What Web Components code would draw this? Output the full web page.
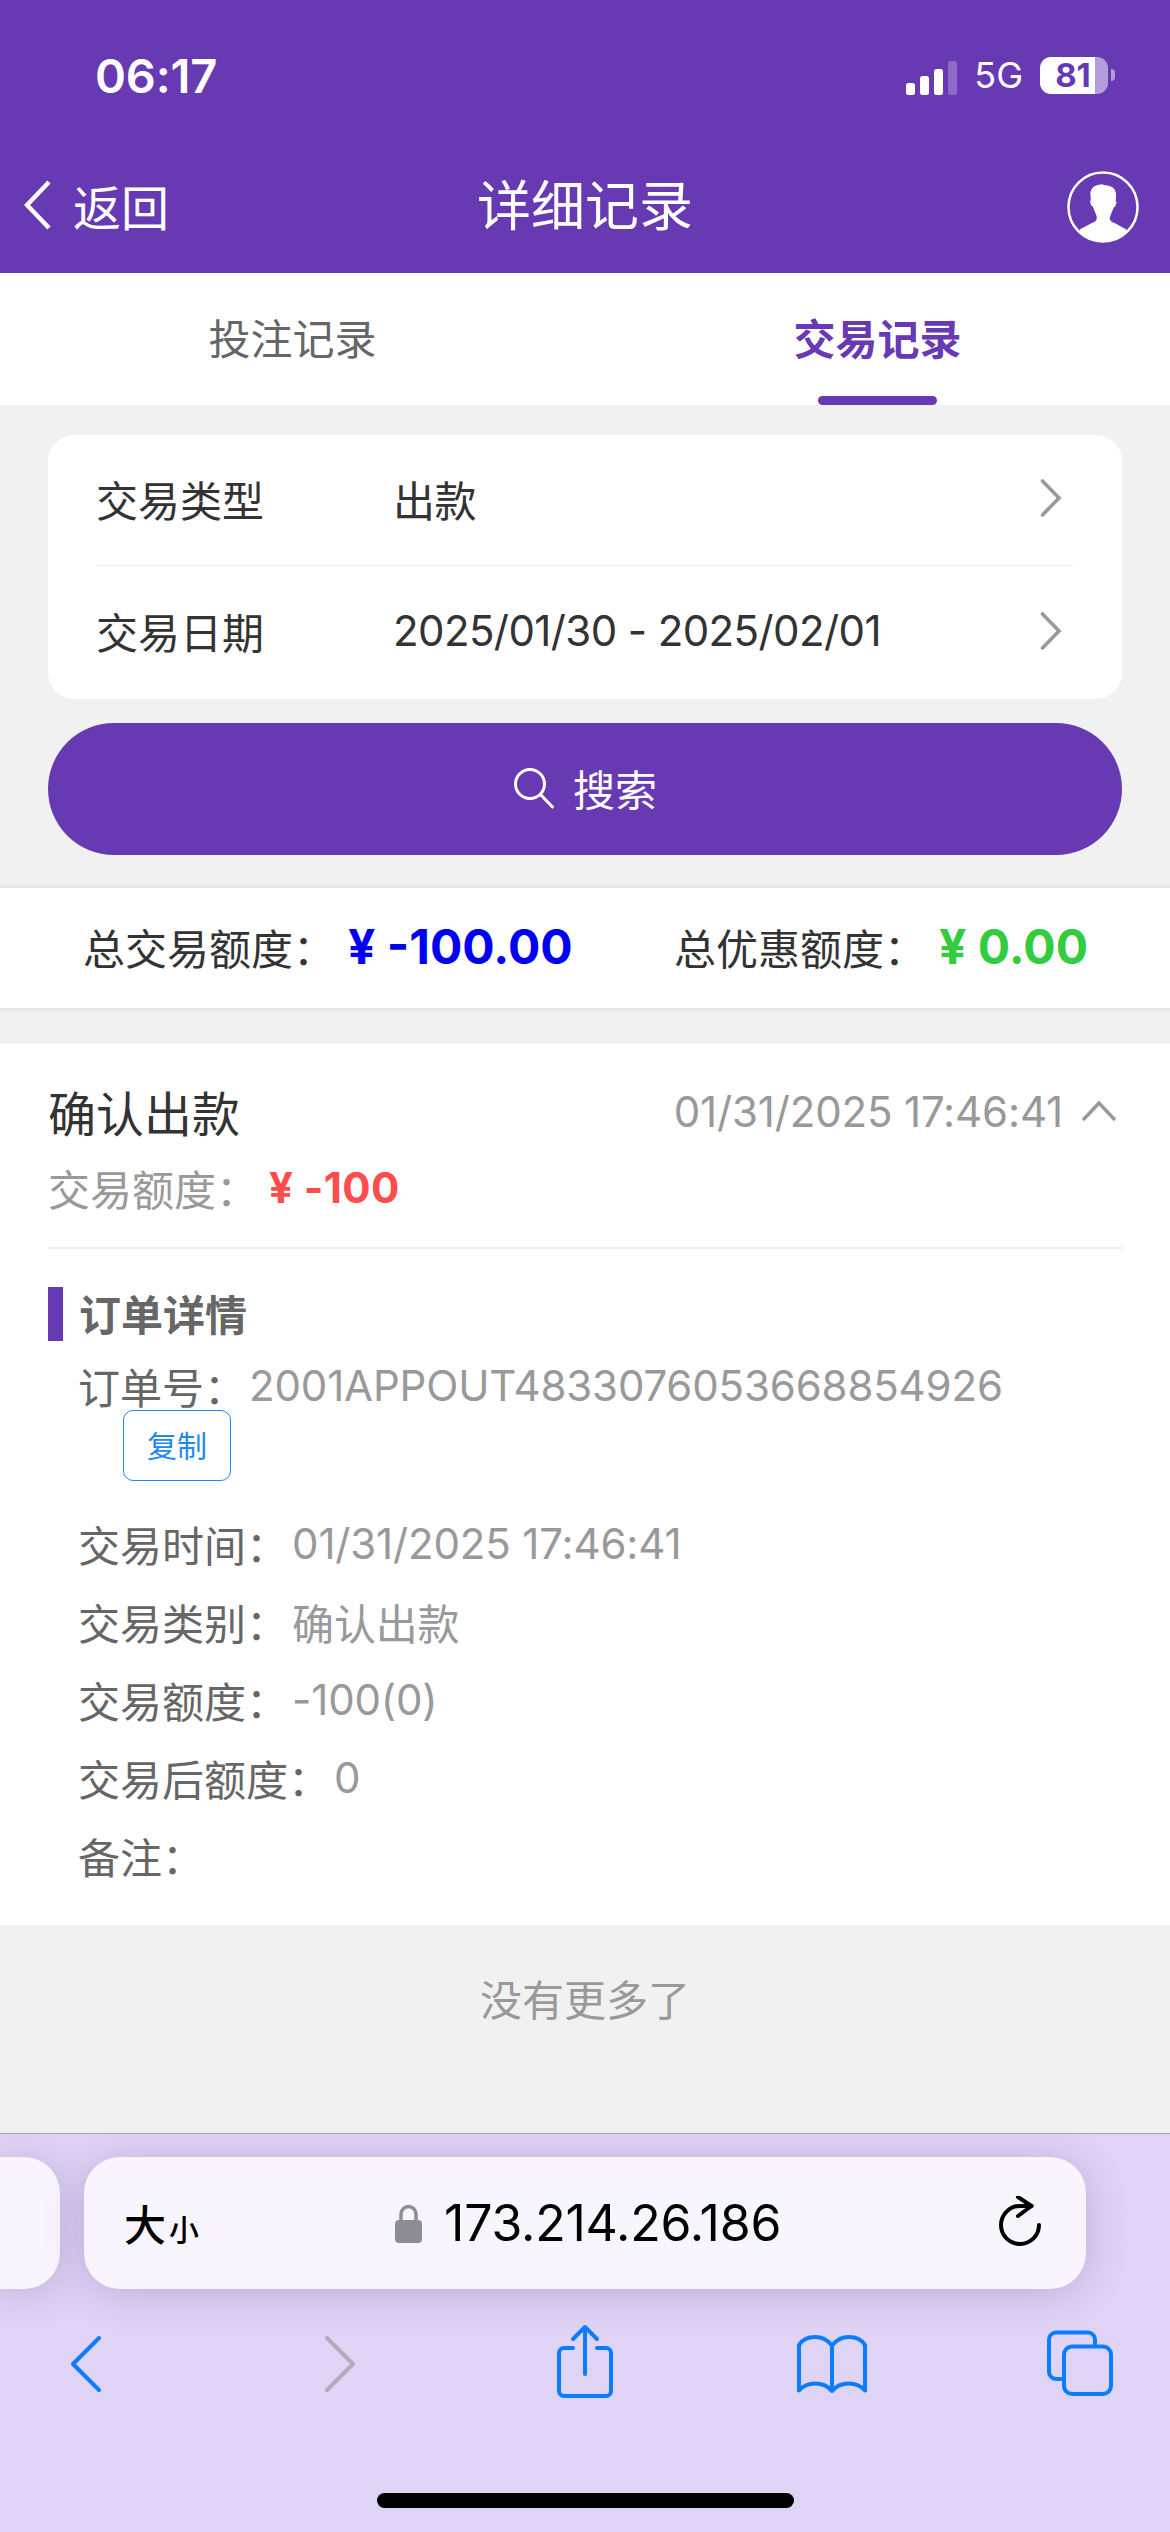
<!DOCTYPE html>
<html lang="zh">
<head>
<meta charset="utf-8">
<title>详细记录</title>
<style>
    html, body { margin: 0; padding: 0; width: 1170px; height: 2532px; overflow: hidden; background: #f1f1f1; }
    body {
        display: flex;
        flex-direction: column;
        font-family: Inter, "Noto Sans CJK SC", sans-serif;
        --purple: #673ab4;
    }
    page-content { flex: 1; }
</style>
</head>
<body>
    <status-bar time="06:17" network="5G" battery="81"></status-bar>
    <nav-header title="详细记录" back="返回"></nav-header>
    <tab-bar first="投注记录" second="交易记录"></tab-bar>
    <page-content>
        <filter-card>
            <filter-row label="交易类型" value="出款"></filter-row>
            <filter-row label="交易日期" value="2025/01/30 - 2025/02/01" last></filter-row>
        </filter-card>
        <search-button text="搜索"></search-button>
        <summary-bar>
            <summary-item label="总交易额度：" amount="¥ -100.00" color="#0000f5"></summary-item>
            <summary-item label="总优惠额度：" amount="¥ 0.00" color="#33cc3f"></summary-item>
        </summary-bar>
        <record-item title="确认出款" time="01/31/2025 17:46:41" amount="¥ -100">
            <detail-row label="交易时间：" value="01/31/2025 17:46:41"></detail-row>
            <detail-row label="交易类别：" value="确认出款"></detail-row>
            <detail-row label="交易额度：" value="-100(0)"></detail-row>
            <detail-row label="交易后额度：" value="0"></detail-row>
            <detail-row label="备注：" value=""></detail-row>
        </record-item>
        <list-end text="没有更多了"></list-end>
    </page-content>
    <browser-toolbar url="173.214.26.186"></browser-toolbar>

<script>
// small base so each element only has to give its css and its markup
class BaseElement extends HTMLElement {
    constructor() {
        super();
        this.attachShadow({ mode: "open" });
    }

    attr(name) {
        return this.getAttribute(name) || "";
    }

    // the traditional cut centres the full width colon in its box
    label(text) {
        return text.replace('：', '<span style="font-family:\'Noto Sans CJK TC\',sans-serif;color:inherit">：</span>');
    }

    connectedCallback() {
        this.shadowRoot.innerHTML = `<style>${this.templateCss()}</style>${this.template()}`;
    }
}

customElements.define('status-bar', class StatusBar extends BaseElement {
    templateCss() {
        return `
            :host { display: flex; align-items: center; height: 132px; padding: 18px 55px 0 95px; box-sizing: border-box;
                    background: var(--purple); color: #fff; }
            .time { font-size: 47px; font-weight: 600; letter-spacing: -.2px; flex: 1; }
            .signal { display: flex; align-items: flex-end; gap: 5px; height: 34px; margin: 5px 17px 0 0; }
            .signal i { display: block; width: 9px; background: #fff; border-radius: 2.5px; }
            .net { font-size: 36px; font-weight: 400; margin-right: 17px; }
            .battery { position: relative; width: 68px; height: 37px; border-radius: 11px; color: var(--purple);
                       font-size: 33px; font-weight: 700; line-height: 37px; text-align: center;
                       background: linear-gradient(90deg, #fff 55px, #b39ddb 55px); }
            .battery span { position: relative; left: -1px; }
            .nub { width: 4px; height: 12px; margin-left: 3px; background: #b39ddb; border-radius: 0 6px 6px 0; }
        `;
    }

    template() {
        return `
            <div class="time">${this.attr('time')}</div>
            <div class="signal">
                <i style="height:12px"></i><i style="height:19px"></i><i style="height:26px"></i>
                <i style="height:34px;background:#8d6bcb"></i>
            </div>
            <div class="net">${this.attr('network')}</div>
            <div class="battery"><span>${this.attr('battery')}</span></div>
            <div class="nub"></div>
        `;
    }
});

customElements.define('nav-header', class NavHeader extends BaseElement {
    templateCss() {
        return `
            :host { display: flex; align-items: center; height: 141px; padding: 0 31px 0 24px; box-sizing: border-box;
                    background: var(--purple); color: #fff; position: relative; }
            .back { display: flex; align-items: center; gap: 21px; font-size: 48px; flex: 1; margin-top: 4px; }
            .back svg { width: 28px; height: 50px; }
            .title { font-size: 54px; position: absolute; left: 0; right: 0; text-align: center; pointer-events: none; }
            .avatar { width: 72px; height: 72px; margin-top: 9px; }
        `;
    }

    template() {
        return `
            <div class="back">
                <svg viewBox="0 0 28 50"><path d="M25 2 3 25l22 23" fill="none" stroke="#fff" stroke-width="4.5"/></svg>
                <span>${this.attr('back')}</span>
            </div>
            <div class="title">${this.attr('title')}</div>
            <svg class="avatar" viewBox="0 0 74 74">
                <defs><clipPath id="disc"><circle cx="37" cy="37" r="35"/></clipPath></defs>
                <circle cx="37" cy="37" r="35.5" fill="none" stroke="#fff" stroke-width="2.6"/>
                <path clip-path="url(#disc)" fill="#fff" d="M37 13.500C29 13.500 24 17 24 24l.5 6-1 1 1.500 4.500 1.500 1 4 10V49c0 2-2 3.500-5 4.500L13 60v16h48V60l-12-6.500c-3-1-5-2.500-5-4.500v-1.500l4-10 1.500-1 1.500-4.500-1-1 .5-6c0-7-5-10.500-13-10.500z"/>
            </svg>
        `;
    }
});

customElements.define('tab-bar', class TabBar extends BaseElement {
    templateCss() {
        return `
            :host { display: flex; height: 132px; background: #fff; font-size: 42px; color: #666; }
            .tab { flex: 1; display: flex; align-items: center; justify-content: center; position: relative; padding-bottom: 6px; }
            .on { color: var(--purple); font-weight: 700; }
            .on::after { content: ""; position: absolute; left: 233px; bottom: 0; width: 119px; height: 9px;
                         background: var(--purple); border-radius: 5px; }
        `;
    }

    template() {
        return `
            <div class="tab">${this.attr('first')}</div>
            <div class="tab on">${this.attr('second')}</div>
        `;
    }
});

customElements.define('filter-card', class FilterCard extends BaseElement {
    templateCss() {
        return `:host { display: block; margin: 30px 48px 24px; padding: 0 49px; background: #fff; border-radius: 26px; }`;
    }

    template() {
        return `<slot></slot>`;
    }
});

customElements.define('filter-row', class FilterRow extends BaseElement {
    templateCss() {
        return `
            :host { display: flex; align-items: center; height: 131px; padding-bottom: 4px; box-sizing: border-box;
                    font-size: 42px; color: #333; border-bottom: 1.5px solid #eeeeee; }
            :host([last]) { height: 133px; border-bottom: 0; }
            .label { width: 297px; margin-left: -1px; }
            .value { flex: 1; letter-spacing: -.6px; }
            svg { width: 22px; height: 38px; margin-right: 11px; }
        `;
    }

    template() {
        return `
            <div class="label">${this.attr('label')}</div>
            <div class="value">${this.attr('value')}</div>
            <svg viewBox="0 0 22 38"><path d="M2.500 2 19 19 2.500 36" fill="none" stroke="#999" stroke-width="3.600" stroke-linecap="round"/></svg>
        `;
    }
});

customElements.define('search-button', class SearchButton extends BaseElement {
    templateCss() {
        return `
            :host { display: flex; align-items: center; justify-content: center; gap: 18px; height: 132px; margin: 0 48px;
                    padding-bottom: 3px; box-sizing: border-box;
                    background: var(--purple); border-radius: 66px; color: #fff; font-size: 42px; }
            svg { width: 42px; height: 42px; }
        `;
    }

    template() {
        return `
            <svg viewBox="0 0 42 42" fill="none" stroke="#fff" stroke-width="3">
                <circle cx="17" cy="17" r="14.500"/><path d="m27.500 27.500 12 12.500" stroke-linecap="round"/>
            </svg>
            <span>${this.attr('text')}</span>
        `;
    }
});

customElements.define('summary-bar', class SummaryBar extends BaseElement {
    templateCss() {
        return `
            :host { display: flex; align-items: center; justify-content: space-between; height: 126px; margin-top: 30px;
                    padding: 0 82px 4px 83px; background: #fff; box-sizing: border-box;
                    border-top: 3px solid #e6e6e6; border-bottom: 3px solid #e6e6e6; }
        `;
    }

    template() {
        return `<slot></slot>`;
    }
});

customElements.define('summary-item', class SummaryItem extends BaseElement {
    templateCss() {
        return `
            :host { display: flex; align-items: center; font-size: 42px; color: #333; }
            .amount { font-size: 48px; font-weight: 700; margin-left: 13px; }
        `;
    }

    template() {
        return `
            <span>${this.label(this.attr('label'))}</span>
            <span class="amount" style="color:${this.attr('color')}">${this.attr('amount')}</span>
        `;
    }
});

customElements.define('record-item', class RecordItem extends BaseElement {
    templateCss() {
        return `
            :host { display: block; height: 883px; margin-top: 31px; padding: 0 48px; background: #fff; box-sizing: border-box;
                    border-top: 1.5px solid #e8e8f0; }
            .head { height: 206px; border-bottom: 2px solid #eeeeee; box-sizing: border-box; }
            .line { display: flex; align-items: center; justify-content: space-between; height: 70px; padding-top: 33px; }
            .name { font-size: 48px; color: #333; }
            .time { display: flex; align-items: center; gap: 18px; font-size: 42px; color: #999; margin-right: 5px; letter-spacing: -.15px; }
            .time svg { width: 36px; height: 22px; }
            .money { display: flex; align-items: center; height: 74px; margin-top: 4px; font-size: 42px; color: #999; }
            .money b { font-size: 42px; font-weight: 700; color: #ff4d4d; margin-left: 11px; letter-spacing: .4px; }
            .section { height: 54px; margin-top: 38px; padding: 0 0 4px 16px; box-sizing: border-box; border-left: 15px solid var(--purple);
                       display: flex; align-items: center; font-size: 42px; font-weight: 700; color: #666; margin-bottom: 21px; }
            .order { margin-left: 30px; height: 48px; padding-bottom: 2px; box-sizing: border-box; display: flex; align-items: center; font-size: 42px; color: #666; white-space: nowrap; }
            .order .no { color: #999; margin-left: 3px; letter-spacing: -.15px; }
            .copy { display: flex; align-items: center; justify-content: center; width: 108px; height: 71px; margin: 0 0 23px 75px;
                    box-sizing: border-box; border: 1.500px solid #1e88f5; border-radius: 10px; color: #1e88f5; font-size: 30px; padding-bottom: 3px; }
        `;
    }

    template() {
        return `
            <div class="head">
                <div class="line">
                    <div class="name">${this.attr('title')}</div>
                    <div class="time">${this.attr('time')}
                        <svg viewBox="0 0 36 22"><path d="M2 20 18 3l16 17" fill="none" stroke="#999" stroke-width="3.500"/></svg>
                    </div>
                </div>
                <div class="money"><span>${this.label('交易额度：')}</span><b>${this.attr('amount')}</b></div>
            </div>
            <div class="section">订单详情</div>
            <div class="order"><span>${this.label('订单号：')}</span><span class="no">2001APPOUT4833076053668854926</span></div>
            <div class="copy">复制</div>
            <slot></slot>
        `;
    }
});

customElements.define('detail-row', class DetailRow extends BaseElement {
    templateCss() {
        return `
            :host { display: flex; align-items: center; height: 78px; margin-left: 30px; font-size: 42px; color: #666; }
            .val { color: #999; margin-left: 4px; letter-spacing: -.15px; }
        `;
    }

    template() {
        return `<span>${this.label(this.attr('label'))}</span><span class="val">${this.attr('value')}</span>`;
    }
});

customElements.define('list-end', class ListEnd extends BaseElement {
    templateCss() {
        return `:host { display: block; padding-top: 45px; text-align: center; font-size: 42px; color: #999; line-height: 62px; }`;
    }

    template() {
        return `${this.attr('text')}`;
    }
});

customElements.define('browser-toolbar', class BrowserToolbar extends BaseElement {
    templateCss() {
        return `
            :host { display: block; height: 399px; box-sizing: border-box; background: #dfd4f5; border-top: 1.500px solid #aaa4b8;
                    padding-top: 23px; position: relative; }
            .bars { display: flex; gap: 24px; height: 132px; }
            .peek { width: 60px; background: #f8f5fe; border-radius: 0 36px 36px 0; box-shadow: 0 4px 40px rgba(70,40,120,.22); }
            .address { width: 1002px; display: flex; align-items: center; position: relative; box-sizing: border-box;
                       background: #f8f5fe; border-radius: 36px; box-shadow: 0 4px 40px rgba(70,40,120,.22); padding: 0 44px 0 40px; }
            .size { display: flex; align-items: baseline; gap: 3px; font-size: 42px; font-weight: 500; color: #000; flex: 1; margin-top: -2px; }
            .size small { font-size: 30px; font-weight: 500; }
            .host { position: absolute; left: 311px; display: flex; align-items: center; gap: 22px; font-size: 50px; color: #000; letter-spacing: -.2px; }
            .host svg { width: 27px; height: 39px; }
            .reload { width: 44px; height: 54px; }
            .tools { display: flex; align-items: flex-start; height: 80px; margin-top: 51px; position: relative; }
            .tools svg { position: absolute; fill: none; stroke: #0a7cff; stroke-width: 4; stroke-linecap: round; stroke-linejoin: round; }
            .bar { position: absolute; left: 377px; bottom: 24px; width: 417px; height: 15px; background: #000; border-radius: 8px; }
        `;
    }

    template() {
        return `
            <div class="bars">
                <div class="peek"></div>
                <div class="address">
                    <div class="size">大<small>小</small></div>
                    <div class="host">
                        <svg viewBox="0 0 27 39">
                            <path d="M6 18V10a7.500 7.500 0 0 1 15 0v8" fill="none" stroke="#8e8c94" stroke-width="3.500"/>
                            <rect y="16" width="27" height="23" rx="4" fill="#8e8c94"/>
                        </svg>
                        <span>${this.attr('url')}</span>
                    </div>
                    <svg class="reload" viewBox="0 -4 44 54" fill="none" stroke="#000" stroke-width="4" stroke-linecap="round" stroke-linejoin="round">
                        <path d="M41 25A19 19 0 1 1 22 6h11.500"/>
                        <path d="m20 -3 13.500 9L20 16"/>
                    </svg>
                </div>
            </div>
            <div class="tools">
                <svg style="left:70px;top:-5px" width="34" height="58" viewBox="0 0 34 58"><path d="M29 3 3 29l26 26"/></svg>
                <svg style="left:324px;top:-5px;stroke:#b1aabd" width="34" height="58" viewBox="0 0 34 58"><path d="m3 3 26 26L3 55"/></svg>
                <svg style="left:555px;top:-16px" width="60" height="74" viewBox="0 0 60 74">
                    <path d="M18 24H9a5 5 0 0 0-5 5v38a5 5 0 0 0 5 5h42a5 5 0 0 0 5-5V29a5 5 0 0 0-5-5h-9"/>
                    <path d="M30 50V3M18 15 30 3l12 12"/>
                </svg>
                <svg style="left:795px;top:-6px" width="74" height="62" viewBox="0 0 74 62">
                    <path d="M37 12C33 6 27 3 20 3 12 3 7 6 4 11v45.500C9 51 14 49.500 20 49.500c7 0 13 2.500 17 7.500 4-5 10-7.500 17-7.500 6 0 11 1.500 16 7V11C67 6 62 3 54 3c-7 0-13 3-17 9v45"/>
                </svg>
                <svg style="left:1044px;top:-11px" width="70" height="70" viewBox="0 0 70 70">
                    <path d="M17 50h-5a7 7 0 0 1-7-7V10.500a7 7 0 0 1 7-7h32a7 7 0 0 1 7 7V17"/>
                    <rect x="20" y="17.500" width="47" height="47.500" rx="8"/>
                </svg>
            </div>
            <div class="bar"></div>
        `;
    }
});

customElements.define('page-content', class PageContent extends BaseElement {
    templateCss() {
        return `:host { display: block; overflow: hidden; }`;
    }

    template() {
        return `<slot></slot>`;
    }
});
</script>
</body>
</html>
